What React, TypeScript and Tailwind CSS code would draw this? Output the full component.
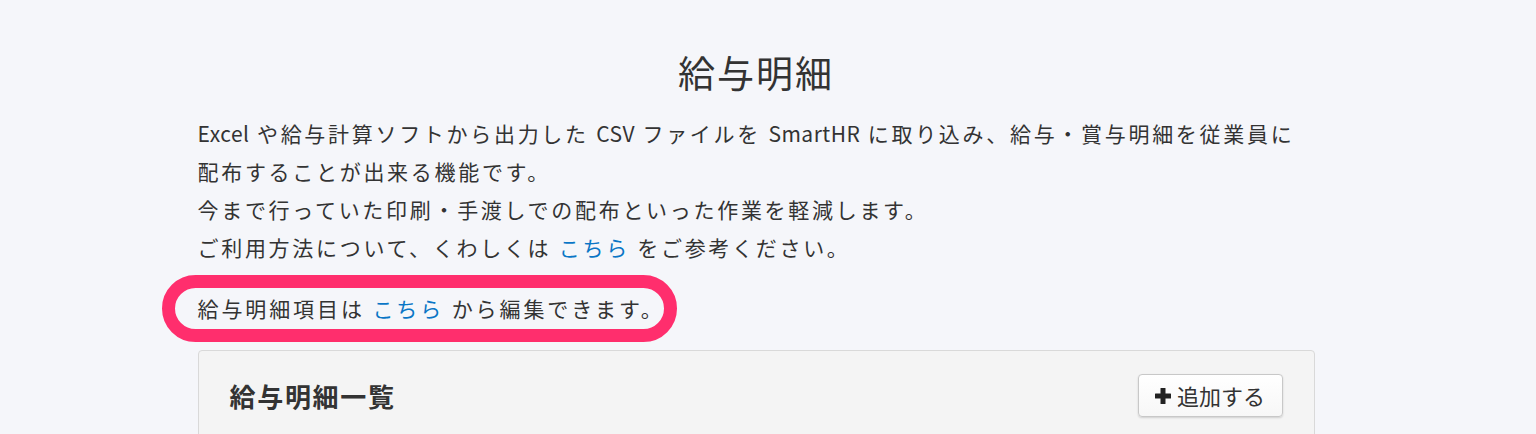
import React from 'react';

const PlusIcon: React.FC = () => (
    <svg width="16" height="16" viewBox="0 0 16 16" className="text-[#222]" fill="currentColor">
        <rect x="5.5" y="0" width="5" height="16" rx="0.5" />
        <rect x="0" y="5.5" width="16" height="5" rx="0.5" />
    </svg>
);

const Link: React.FC<{ children: React.ReactNode }> = ({ children }) => (
    <a href="#" className="text-[#0a76c6] no-underline">{children}</a>
);

// latin words sit tighter than the kana around them
const En: React.FC<{ children: React.ReactNode }> = ({ children }) => (
    <span className="tracking-[0.5px]">{children}</span>
);

export default function App() {
    return (
        <div className="min-h-screen bg-[#f5f6fa] text-[#333] font-['Noto_Sans_CJK_JP','Noto_Sans',sans-serif]">
            <div className="w-[1512px]">
                <div className="mx-auto w-[1117px] pt-[47px]">
                    <h1 className="text-center text-[37px] leading-[50px] tracking-[2px] font-normal">給与明細</h1>

                    <div className="mt-[17px] text-[21px] leading-[38px] tracking-[2.7px] whitespace-nowrap">
                        <p><En>Excel</En> や給与計算ソフトから出力した <En>CSV</En> ファイルを <En>SmartHR</En> に取り込み、給与・賞与明細を従業員に</p>
                        <p>配布することが出来る機能です。</p>
                        <p>今まで行っていた印刷・手渡しでの配布といった作業を軽減します。</p>
                        <p>
                            ご利用方法について、くわしくは <Link>こちら</Link> をご参考ください。
                        </p>
                    </div>

                    {/* highlighted note */}
                    <div className="mt-[9px] -ml-[36px] w-[515px] rounded-full border-[13px] border-[#ff2e6d] px-[23px] text-[21px] leading-[41px] tracking-[2.9px] whitespace-nowrap">
                        給与明細項目は <Link>こちら</Link> から編集できます。
                    </div>

                    <div className="mt-[8px] rounded-[4px] border border-[#d9d9d9] bg-[#f4f4f4] h-[120px]">
                        <div className="flex items-center justify-between px-[31px] pt-[23px]">
                            <h2 className="text-[26px] font-bold tracking-[1.7px] text-[#333]">給与明細一覧</h2>
                            <button className="flex h-[43px] w-[145px] items-center justify-center gap-[6px] rounded-[4px] border border-[#c8c8c8] bg-gradient-to-b from-white to-[#f7f7f7] text-[22px] text-[#333] shadow-[0_1px_2px_rgba(0,0,0,0.15)]">
                                <PlusIcon />
                                <span>追加する</span>
                            </button>
                        </div>
                    </div>
                </div>
            </div>
        </div>
    );
}
